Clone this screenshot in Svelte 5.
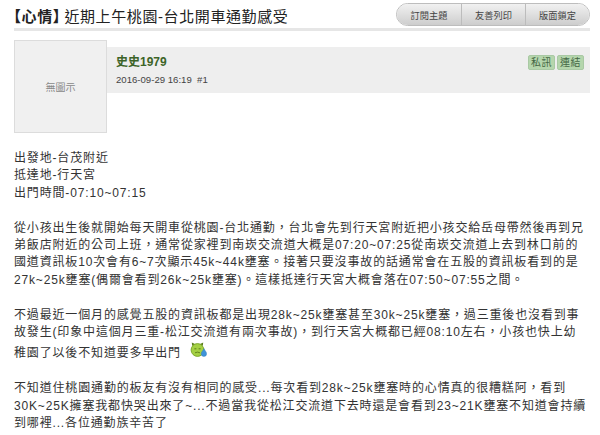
<script>
  const actions = ['訂閱主題', '友善列印', '版面鎖定'];
</script>

<div class="page">
  <header class="topic">
    <h1><b>【心情】</b>近期上午桃園-台北開車通勤感受</h1>
    <div class="actions">
      {#each actions as a}
        <button>{a}</button>
      {/each}
    </div>
  </header>

  <section class="post-head">
    <div class="avatar">無圖示</div>
    <div class="meta">
      <div>
        <div class="name">史史1979</div>
        <div class="date">2016-09-29 16:19 &nbsp;#1</div>
      </div>
      <div class="tags">
        <span>私訊</span>
        <span>連結</span>
      </div>
    </div>
  </section>

  <article class="body">
    <p>出發地-台茂附近<br />抵達地-行天宮<br />出門時間-07:10~07:15</p>
    <p>從小孩出生後就開始每天開車從桃園-台北通勤，台北會先到行天宮附近把小孩交給岳母帶然後再到兄<br />弟飯店附近的公司上班，通常從家裡到南崁交流道大概是07:20~07:25從南崁交流道上去到林口前的<br />國道資訊板10次會有6~7次顯示45k~44k壅塞。接著只要沒事故的話通常會在五股的資訊板看到的是<br />27k~25k壅塞(偶爾會看到26k~25k壅塞)。這樣抵達行天宮大概會落在07:50~07:55之間。</p>
    <p>不過最近一個月的感覺五股的資訊板都是出現28k~25k壅塞甚至30k~25k壅塞，過三重後也沒看到事<br />故發生(印象中這個月三重-松江交流道有兩次事故)，到行天宮大概都已經08:10左右，小孩也快上幼<br />稚園了以後不知道要多早出門
      <svg class="smiley" width="17" height="15" viewBox="0 0 17 15" aria-hidden="true">
        <path d="M2.2 4 L1.8 0.4 L5 2 Z M10 2 L13.2 0.4 L12.8 4 Z" fill="#5d7f1c" />
        <circle cx="7.5" cy="8" r="6.4" fill="#a4d043" stroke="#76a326" stroke-width="0.9" />
        <path d="M4.4 6.8h2M8.6 6.8h2" stroke="#5c7d1a" stroke-width="1" />
        <path d="M5 10.8q2.5-1.4 5 0" fill="none" stroke="#5c7d1a" stroke-width="0.9" />
        <path d="M14 6.6 C14.8 8.6 16.6 9.9 16.6 11.8 A2.7 2.7 0 0 1 11.2 11.8 C11.2 9.9 13.2 8.6 14 6.6Z" fill="#3f93d8" stroke="#2f78ba" stroke-width="0.4" />
      </svg>
    </p>
    <p>不知道住桃園通勤的板友有沒有相同的感受...每次看到28k~25k壅塞時的心情真的很糟糕阿，看到<br />30K~25K擁塞我都快哭出來了~...不過當我從松江交流道下去時還是會看到23~21K壅塞不知道會持續<br />到哪裡...各位通勤族辛苦了</p>
  </article>
</div>

<style>
  :global(body) {
    background: #fff;
  }

  .page {
    width: 576px;
    height: 435px;
    margin-left: 14px;
    color: #333;
    font-family: "Liberation Sans", "Noto Sans CJK TC", sans-serif;
  }

  .topic {
    display: flex;
    align-items: center;
    justify-content: space-between;
    height: 28px;
    padding-top: 3px;
    box-sizing: border-box;
    box-shadow: 0 3px 0 #e6e6e6;
  }

  h1 {
    margin: 0;
    font-size: 15px;
    font-weight: 400;
    letter-spacing: 0.6px;
    color: #222;
    white-space: nowrap;
  }

  h1 b {
    font-weight: 700;
    margin-left: -8px;
    margin-right: -4px;
  }

  .actions {
    display: flex;
    height: 23px;
    margin-top: -2px;
    border: 1px solid #bdbdbd;
    border-radius: 12px;
    overflow: hidden;
    box-sizing: border-box;
  }

  button {
    width: 64px;
    padding: 0;
    border: 0;
    border-left: 1px solid #bcbcbc;
    background: linear-gradient(#f1f1f1, #cdcdcd);
    color: #444;
    font: 9.2px "Liberation Sans", "Noto Sans CJK TC", sans-serif;
    letter-spacing: 0.1px;
  }

  button:first-child {
    border-left: 0;
  }

  .post-head {
    display: flex;
    align-items: flex-start;
    margin-top: 12px;
  }

  .avatar {
    display: flex;
    align-items: center;
    justify-content: center;
    flex: none;
    width: 93px;
    height: 93px;
    box-sizing: border-box;
    border: 1px solid #dcdcdc;
    background: #f0f0f0;
    color: #888;
    font-size: 10px;
  }

  .meta {
    flex: 1;
    display: flex;
    justify-content: space-between;
    height: 46px;
    margin-top: 7px;
    padding: 8px 6px 0 9px;
    box-sizing: border-box;
    background: #eee;
  }

  .name {
    font-size: 12px;
    font-weight: 700;
    line-height: 15px;
    color: #3c6428;
  }

  .date {
    margin-top: 3px;
    font-size: 9.6px;
    line-height: 13px;
    color: #444;
  }

  .tags {
    display: flex;
    gap: 2px;
    height: 15px;
  }

  .tags span {
    padding: 0 2px;
    border: 1px solid #a9c9a4;
    border-radius: 2px;
    background: #b5d6ad;
    color: #446644;
    font-size: 10px;
    line-height: 13px;
    letter-spacing: 0.5px;
  }

  .body {
    margin-top: 17px;
    font-size: 12px;
    line-height: 17.4px;
    letter-spacing: 0.84px;
    white-space: nowrap;
    color: #333;
  }

  p {
    margin: 0 0 17.4px;
  }

  .smiley {
    vertical-align: baseline;
    margin-top: 1px;
    margin-left: 5px;
  }
</style>
